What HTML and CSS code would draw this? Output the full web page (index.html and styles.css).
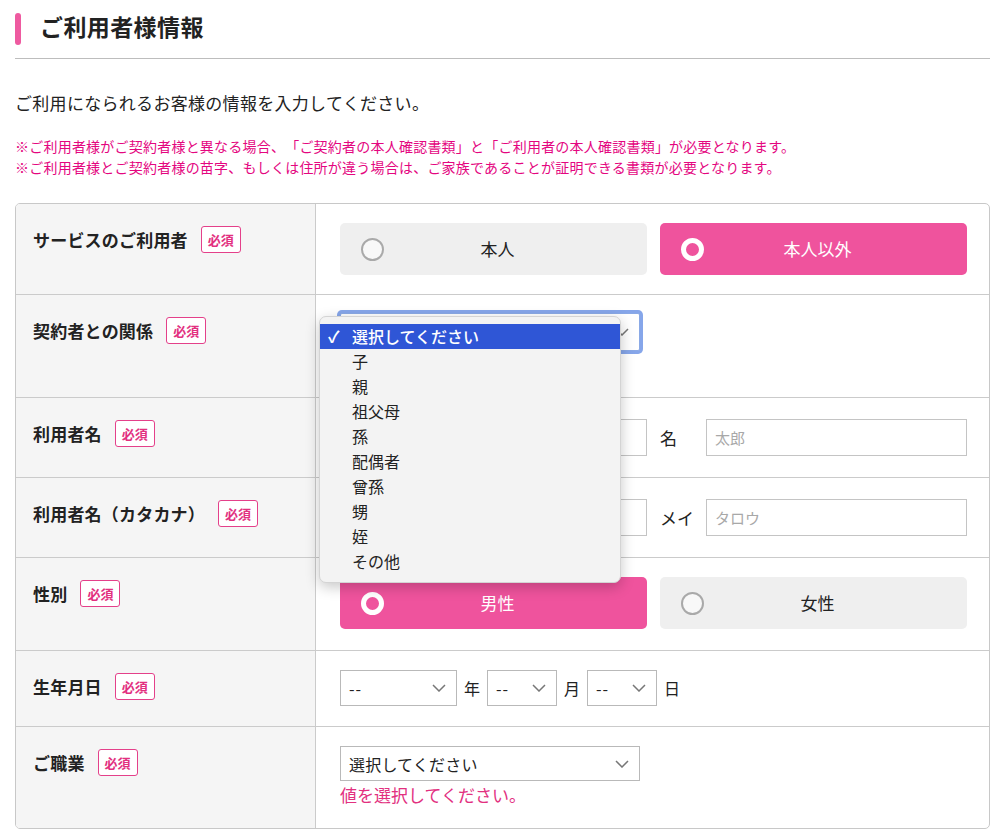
FILE: index.html
```html
<!DOCTYPE html>
<html lang="ja">
<head>
<meta charset="utf-8">
<title>ご利用者様情報</title>
<link rel="stylesheet" href="styles.css">
</head>
<body>
<div class="page">
  <h2 class="section-title"><span class="title-bar"></span>ご利用者様情報</h2>
  <p class="intro">ご利用になられるお客様の情報を入力してください。</p>
  <div class="notes">
    <p>※ご利用者様がご契約者様と異なる場合、「ご契約者の本人確認書類」と「ご利用者の本人確認書類」が必要となります。</p>
    <p>※ご利用者様とご契約者様の苗字、もしくは住所が違う場合は、ご家族であることが証明できる書類が必要となります。</p>
  </div>

  <div class="form-table">
    <div class="row r1">
      <div class="label-cell"><span class="label">サービスのご利用者</span><span class="badge">必須</span></div>
      <div class="field-cell">
        <div class="choice-group">
          <div class="choice"><span class="radio"></span><span class="choice-text">本人</span></div>
          <div class="choice is-selected"><span class="radio"></span><span class="choice-text">本人以外</span></div>
        </div>
      </div>
    </div>

    <div class="row r2">
      <div class="label-cell"><span class="label">契約者との関係</span><span class="badge">必須</span></div>
      <div class="field-cell field-rel">
        <div class="select select-wide is-focused">
          <span class="select-value"></span>
          <svg class="chev" width="14" height="8" viewBox="0 0 14 8"><path d="M1 1l6 6 6-6" fill="none" stroke="#777" stroke-width="1.5"/></svg>
        </div>
        <ul class="menu">
          <li class="menu-item is-active"><span class="check">✓</span>選択してください</li>
          <li class="menu-item">子</li>
          <li class="menu-item">親</li>
          <li class="menu-item">祖父母</li>
          <li class="menu-item">孫</li>
          <li class="menu-item">配偶者</li>
          <li class="menu-item">曾孫</li>
          <li class="menu-item">甥</li>
          <li class="menu-item">姪</li>
          <li class="menu-item">その他</li>
        </ul>
      </div>
    </div>

    <div class="row r3">
      <div class="label-cell"><span class="label">利用者名</span><span class="badge">必須</span></div>
      <div class="field-cell field-center">
        <div class="name-group">
          <div class="name-half"><span class="name-label"></span><div class="text-input"></div></div>
          <div class="name-half"><span class="name-label">名</span><div class="text-input"><span class="placeholder">太郎</span></div></div>
        </div>
      </div>
    </div>

    <div class="row r4">
      <div class="label-cell"><span class="label">利用者名（カタカナ）</span><span class="badge">必須</span></div>
      <div class="field-cell field-center">
        <div class="name-group">
          <div class="name-half"><span class="name-label"></span><div class="text-input"></div></div>
          <div class="name-half"><span class="name-label">メイ</span><div class="text-input"><span class="placeholder">タロウ</span></div></div>
        </div>
      </div>
    </div>

    <div class="row r5">
      <div class="label-cell"><span class="label">性別</span><span class="badge">必須</span></div>
      <div class="field-cell">
        <div class="choice-group">
          <div class="choice is-selected"><span class="radio"></span><span class="choice-text">男性</span></div>
          <div class="choice"><span class="radio"></span><span class="choice-text">女性</span></div>
        </div>
      </div>
    </div>

    <div class="row r6">
      <div class="label-cell"><span class="label">生年月日</span><span class="badge">必須</span></div>
      <div class="field-cell">
        <div class="date-group">
          <div class="select select-year"><span class="select-value">--</span><svg class="chev" width="14" height="8" viewBox="0 0 14 8"><path d="M1 1l6 6 6-6" fill="none" stroke="#777" stroke-width="1.5"/></svg></div>
          <span class="unit">年</span>
          <div class="select select-small"><span class="select-value">--</span><svg class="chev" width="14" height="8" viewBox="0 0 14 8"><path d="M1 1l6 6 6-6" fill="none" stroke="#777" stroke-width="1.5"/></svg></div>
          <span class="unit">月</span>
          <div class="select select-small"><span class="select-value">--</span><svg class="chev" width="14" height="8" viewBox="0 0 14 8"><path d="M1 1l6 6 6-6" fill="none" stroke="#777" stroke-width="1.5"/></svg></div>
          <span class="unit">日</span>
        </div>
      </div>
    </div>

    <div class="row r7">
      <div class="label-cell"><span class="label">ご職業</span><span class="badge">必須</span></div>
      <div class="field-cell">
        <div class="select select-wide select-job">
          <span class="select-value">選択してください</span>
          <svg class="chev" width="14" height="8" viewBox="0 0 14 8"><path d="M1 1l6 6 6-6" fill="none" stroke="#777" stroke-width="1.5"/></svg>
        </div>
        <p class="error">値を選択してください。</p>
      </div>
    </div>
  </div>
</div>
</body>
</html>
```

FILE: styles.css
```css
* { box-sizing: border-box; }

body {
  margin: 0;
  background: #fff;
  color: #222;
  font-family: "Noto Sans CJK JP", "Noto Sans", sans-serif;
  text-spacing-trim: space-all;
}

.page {
  padding: 0 10px 0 15px;
}

.section-title {
  display: flex;
  align-items: flex-start;
  margin: 0;
  height: 59px;
  padding-top: 11px;
  border-bottom: 1px solid #bdbdbd;
  font-size: 23px;
  font-weight: 700;
  line-height: 30px;
  color: #222;
  letter-spacing: 0.4px;
}

.title-bar {
  width: 6px;
  height: 32px;
  margin-top: 2px;
  margin-right: 19px;
  border-radius: 3px;
  background: #ee5aa0;
}

.intro {
  margin: 31px 0 0;
  font-size: 17px;
  line-height: 26px;
  letter-spacing: 0.3px;
}

.notes {
  margin-top: 20px;
}

.notes p {
  margin: 0;
  font-size: 14px;
  line-height: 21px;
  color: #e4067f;
  letter-spacing: 0.22px;
}

.form-table {
  margin-top: 25px;
  border: 1px solid #c8c8c8;
  border-radius: 5px;
  overflow: hidden;
}

.row {
  display: flex;
  border-top: 1px solid #cbcbcb;
}

.row.r1 { border-top: 0; min-height: 90px; }
.row.r2 { min-height: 103px; }
.row.r3 { min-height: 80px; }
.row.r4 { min-height: 80px; }
.row.r5 { min-height: 93px; }
.row.r6 { min-height: 76px; }
.row.r7 { min-height: 102px; }

.label-cell {
  width: 300px;
  flex: none;
  display: flex;
  align-items: flex-start;
  gap: 13px;
  padding: 22px 0 0 17px;
  background: #f5f5f5;
  border-right: 1px solid #cbcbcb;
}

.label {
  font-size: 17px;
  font-weight: 700;
  line-height: 27px;
  color: #222;
  letter-spacing: 0.2px;
}

.badge {
  display: inline-block;
  height: 27px;
  padding: 0 6px;
  border: 1px solid #e4408a;
  border-radius: 3px;
  background: #fff;
  color: #e2307f;
  font-size: 13px;
  font-weight: 700;
  line-height: 25px;
}

.field-cell {
  flex: 1;
  position: relative;
  padding: 19px 22px 19px 24px;
}

.field-center {
  display: flex;
  align-items: center;
  padding-top: 0;
  padding-bottom: 0;
}

.r2 .field-cell { padding-top: 18px; }

/* radio choice buttons */
.choice-group {
  display: flex;
  gap: 13px;
}

.choice {
  flex: 1;
  height: 52px;
  display: flex;
  align-items: center;
  padding: 0 36px 0 21px;
  border-radius: 5px;
  background: #efefef;
  font-size: 17px;
  color: #222;
}

.choice .radio {
  width: 23px;
  height: 23px;
  flex: none;
  border-radius: 50%;
  border: 2px solid #a9a9a9;
  background: #f8f8f8;
}

.choice-text {
  flex: 1;
  text-align: center;
  line-height: 24px;
}

.choice.is-selected {
  background: #ef539d;
  color: #fff;
}

.choice.is-selected .radio {
  border: 5px solid #fff;
  background: transparent;
}

/* selects */
.select {
  display: flex;
  align-items: center;
  justify-content: space-between;
  height: 36px;
  padding: 0 10px 0 8px;
  border: 1px solid #b9b9b9;
  background: #fff;
  font-size: 16px;
  color: #222;
}

.select-value {
  line-height: 20px;
  letter-spacing: 1px;
}

.select-wide { width: 300px; }
.select-year { width: 117px; }
.select-small { width: 70px; }

.select-job .select-value { letter-spacing: 0.2px; }

.select.is-focused {
  height: 38px;
  border-color: #8aa9e6;
  box-shadow: 0 0 0 3px #86a6ea;
  border-radius: 2px;
}

.select-job {
  height: 35px;
}

.chev { flex: none; }

/* open dropdown menu */
.menu {
  position: absolute;
  z-index: 10;
  left: 3px;
  top: 21px;
  width: 302px;
  margin: 0;
  padding: 7px 0 8px;
  list-style: none;
  background: #f3f3f3;
  border: 1px solid #d4d4d4;
  border-radius: 7px;
  box-shadow: 0 4px 14px rgba(0, 0, 0, 0.22);
}

.menu-item {
  position: relative;
  height: 25px;
  padding-left: 32px;
  font-size: 16px;
  line-height: 25px;
  color: #222;
}

.menu-item.is-active {
  background: #2f56d6;
  color: #fff;
  font-weight: 500;
}

.check {
  position: absolute;
  left: 8px;
  top: 0;
  font-size: 16px;
  font-weight: 700;
}

/* name inputs */
.name-group {
  flex: 1;
  display: flex;
  gap: 13px;
}

.name-half {
  flex: 1;
  display: flex;
  align-items: center;
}

.name-label {
  width: 46px;
  flex: none;
  font-size: 17px;
}

.text-input {
  flex: 1;
  height: 37px;
  display: flex;
  align-items: center;
  padding-left: 8px;
  border: 1px solid #c4c4c4;
  background: #fff;
}

.placeholder {
  font-size: 15px;
  color: #a8a8a8;
}

/* date */
.date-group {
  display: flex;
  align-items: center;
  gap: 7px;
}

.unit {
  font-size: 16px;
}

.error {
  margin: 2px 0 0;
  font-size: 17px;
  line-height: 24px;
  color: #e2307f;
}
```
